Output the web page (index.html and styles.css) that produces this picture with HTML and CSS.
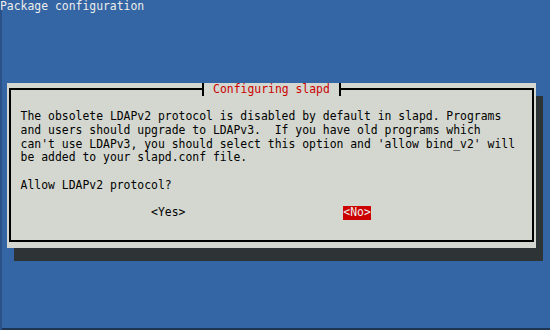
FILE: index.html
```html
<!DOCTYPE html>
<html lang="en">
<head>
<meta charset="utf-8">
<title>Package configuration</title>
<link rel="stylesheet" href="styles.css">
</head>
<body>
<div class="screen">
  <div class="backtitle">Package configuration</div>
  <div class="shadow"></div>
  <div class="dialog">
    <fieldset class="frame">
      <legend class="title">Configuring slapd</legend>
      <p class="message">The obsolete LDAPv2 protocol is disabled by default in slapd. Programs
and users should upgrade to LDAPv3.  If you have old programs which
can't use LDAPv3, you should select this option and 'allow bind_v2' will
be added to your slapd.conf file.</p>
      <p class="question">Allow LDAPv2 protocol?</p>
      <div class="buttons">
        <span class="btn">&lt;Yes&gt;</span>
        <span class="btn btn-active">&lt;No&gt;</span>
      </div>
    </fieldset>
  </div>
</div>
</body>
</html>
```

FILE: styles.css
```css
html, body {
  margin: 0;
  padding: 0;
  background: #3465a4;
}

.screen {
  width: 550px;
  height: 330px;
  display: grid;
  grid-template-columns: repeat(80, 6.875px);
  grid-template-rows: repeat(24, 13.75px);
  background: #3465a4;
  font-family: "DejaVu Sans Mono", "Liberation Mono", monospace;
  font-size: 11.42px;
  line-height: 13.75px;
  color: #000;
  box-shadow: inset 2px 0 0 #2a5288, inset 0 -2px 0 #1d3553;
  overflow: hidden;
}

.backtitle {
  grid-row: 1;
  grid-column: 1 / -1;
  color: #eeeeec;
  white-space: pre;
}

.shadow {
  grid-row: 8 / 20;
  grid-column: 3 / 80;
  background: #2e3436;
}

.dialog {
  grid-row: 7 / 19;
  grid-column: 2 / 79;
  background: #d3d7cf;
  display: flex;
  flex-direction: column;
  padding: 0 2.44px 5.875px 2.44px;
  z-index: 1;
}

.frame {
  flex: 1;
  margin: 0;
  border: 2px solid #000;
  padding: 13.75px 9.3px 0 9.3px;
  min-width: 0;
}

.title {
  height: 13.75px;
  box-sizing: border-box;
  margin-left: 181.2px;
  padding: 0 9.3px;
  border-left: 2px solid #000;
  border-right: 2px solid #000;
  color: #cc0000;
  white-space: pre;
  line-height: 13.75px;
}

.message {
  margin: 0 0 13.75px 0;
  white-space: pre;
}

.question {
  margin: 0 0 13.75px 0;
  white-space: pre;
}

.buttons {
  display: flex;
  gap: 23ch;
  padding-left: 19ch;
}

.btn {
  white-space: pre;
}

.btn-active {
  background: #cc0000;
  color: #eeeeec;
}
```
